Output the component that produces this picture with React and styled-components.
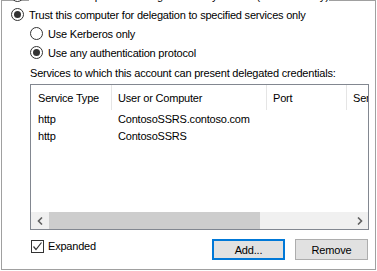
import React from "react";
import styled, { createGlobalStyle } from "styled-components";

const GlobalStyle = createGlobalStyle`
	body {
		margin: 0;
		background: #fff;
		font-family: "Liberation Sans", Arial, sans-serif;
		font-size: 11px;
		letter-spacing: -0.2px;
		color: #000;
	}
`;

const Frame = styled.div`
	box-sizing: border-box;
	width: 375px;
	height: 270px;
	margin-left: 1px;
	border: 1px solid #a0a0a0;
	background: #fff;
	display: flex;
	flex-direction: column;
`;

const RadioRow = styled.div`
	display: flex;
	align-items: center;
	height: 19px;
	gap: 5px;
	padding-left: ${p => p.$indent}px;
	margin-top: ${p => (p.$cut ? "-15px" : "0")};
	span {
		background: #fff;
		white-space: nowrap;
	}
`;

const Radio = styled.span`
	box-sizing: border-box;
	width: 13px;
	height: 13px;
	flex: none;
	border-radius: 50%;
	border: 1px solid #333;
	background: #fff;
	display: flex;
	align-items: center;
	justify-content: center;
	&::after {
		content: "";
		width: 7px;
		height: 7px;
		border-radius: 50%;
		background: ${p => (p.$checked ? "#333" : "transparent")};
	}
`;

const Caption = styled.div`
	height: 16px;
	line-height: 16px;
	margin: 3px 0 3px 28px;
	white-space: nowrap;
`;

const ListBox = styled.div`
	box-sizing: border-box;
	width: 339px;
	height: 146px;
	margin-left: 28px;
	border: 1px solid #828790;
	display: flex;
	flex-direction: column;
	overflow: hidden;
`;

const Columns = styled.div`
	display: grid;
	grid-template-columns: 81px 155px 80px 80px;
	height: ${p => p.$height}px;
	align-items: center;
	white-space: nowrap;
	overflow: hidden;
`;

const HeadCell = styled.div`
	height: 100%;
	display: flex;
	align-items: center;
	padding-left: 6px;
	border-right: 1px solid #e5e5e5;
	overflow: hidden;
	&:first-child {
		padding-left: 7px;
	}
`;

const Cell = styled.div`
	padding-left: 6px;
	&:first-child {
		padding-left: 7px;
	}
`;

const ListBody = styled.div`
	flex: 1;
`;

const ScrollBar = styled.div`
	height: 17px;
	flex: none;
	background: #f0f0f0;
	display: flex;
`;

const ArrowButton = styled.div`
	width: 17px;
	height: 17px;
	display: flex;
	align-items: center;
	justify-content: center;
	margin-left: ${p => (p.$end ? "auto" : "0")};
`;

const Thumb = styled.div`
	width: 211px;
	margin-left: 1px;
	background: #cdcdcd;
`;

const BottomRow = styled.div`
	display: flex;
	align-items: flex-start;
	margin-top: 9px;
	padding: 0 7px 0 29px;
`;

const CheckRow = styled.div`
	display: flex;
	align-items: center;
	gap: 4px;
	height: 14px;
`;

const CheckBox = styled.span`
	box-sizing: border-box;
	width: 13px;
	height: 13px;
	border: 1px solid #333;
	display: flex;
	align-items: center;
	justify-content: center;
`;

const Buttons = styled.div`
	margin-left: auto;
	display: flex;
	gap: 10px;
`;

const Button = styled.button`
	box-sizing: border-box;
	width: 73px;
	height: 21px;
	padding: 0;
	background: #e1e1e1;
	border: ${p => (p.$primary ? "2px solid #0078d7" : "1px solid #adadad")};
	font: inherit;
	letter-spacing: inherit;
	color: #000;
`;

const Chevron = ({ flip }) => (
	<svg width="6" height="8" viewBox="0 0 6 8">
		<polyline
			points={flip ? "1,0.5 4.5,4 1,7.5" : "5,0.5 1.5,4 5,7.5"}
			fill="none"
			stroke="#606060"
			strokeWidth="1.6"
		/>
	</svg>
);

const services = [
	{ type: "http", host: "ContosoSSRS.contoso.com" },
	{ type: "http", host: "ContosoSSRS" }
];

const App = () => (
	<>
		<GlobalStyle />
		<Frame>
			<RadioRow $indent={9} $cut>
				<Radio />
				<span>Trust this computer for delegation to any service (Kerberos only)</span>
			</RadioRow>
			<RadioRow $indent={9}>
				<Radio $checked />
				<span>Trust this computer for delegation to specified services only</span>
			</RadioRow>
			<RadioRow $indent={28}>
				<Radio />
				<span>Use Kerberos only</span>
			</RadioRow>
			<RadioRow $indent={28}>
				<Radio $checked />
				<span>Use any authentication protocol</span>
			</RadioRow>
			<Caption>Services to which this account can present delegated credentials:</Caption>
			<ListBox>
				<Columns $height={25}>
					<HeadCell>Service Type</HeadCell>
					<HeadCell>User or Computer</HeadCell>
					<HeadCell>Port</HeadCell>
					<HeadCell>Service Name</HeadCell>
				</Columns>
				{services.map((s, i) => (
					<Columns $height={17} key={i}>
						<Cell>{s.type}</Cell>
						<Cell>{s.host}</Cell>
					</Columns>
				))}
				<ListBody />
				<ScrollBar>
					<ArrowButton>
						<Chevron />
					</ArrowButton>
					<Thumb />
					<ArrowButton $end>
						<Chevron flip />
					</ArrowButton>
				</ScrollBar>
			</ListBox>
			<BottomRow>
				<CheckRow>
					<CheckBox>
						<svg width="11" height="11" viewBox="0 0 11 11">
							<polyline points="1.5,5.5 4,8.5 9.5,1.5" fill="none" stroke="#333" strokeWidth="1.2" />
						</svg>
					</CheckBox>
					<span>Expanded</span>
				</CheckRow>
				<Buttons>
					<Button $primary>Add...</Button>
					<Button>Remove</Button>
				</Buttons>
			</BottomRow>
		</Frame>
	</>
);

export default App;
